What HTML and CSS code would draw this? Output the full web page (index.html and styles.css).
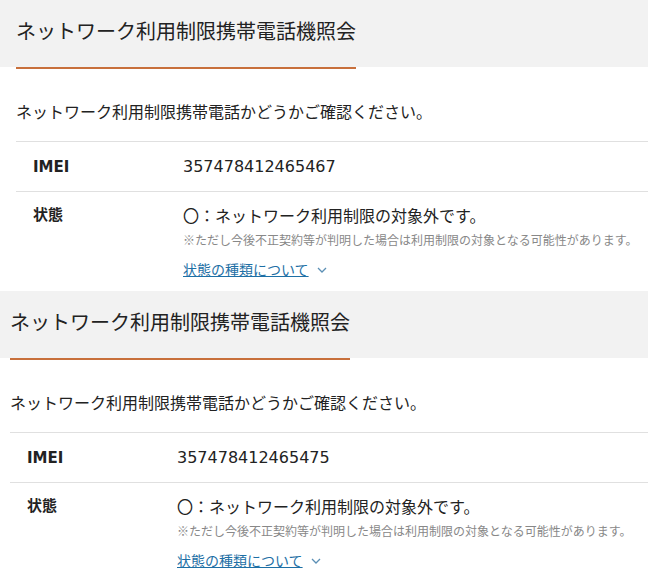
FILE: index.html
```html
<!DOCTYPE html>
<html lang="ja">
<head>
<meta charset="utf-8">
<link rel="stylesheet" href="styles.css">
</head>
<body>
<section class="block block-a">
  <div class="head"><h1 class="title">ネットワーク利用制限携帯電話機照会</h1></div>
  <div class="body">
    <p class="desc">ネットワーク利用制限携帯電話かどうかご確認ください。</p>
    <div class="table">
      <div class="row">
        <div class="label">IMEI</div>
        <div class="value">357478412465467</div>
      </div>
      <div class="row">
        <div class="label">状態</div>
        <div class="value">
          <div class="status">〇：ネットワーク利用制限の対象外です。</div>
          <div class="note">※ただし今後不正契約等が判明した場合は利用制限の対象となる可能性があります。</div>
          <div class="more"><a class="link" href="#">状態の種類について</a><svg class="chev" width="10" height="6" viewBox="0 0 10 6"><polyline points="1,1 5,5 9,1" fill="none" stroke="#5b8fb5" stroke-width="1.3"/></svg></div>
        </div>
      </div>
    </div>
  </div>
</section>
<section class="block block-b">
  <div class="head"><h1 class="title">ネットワーク利用制限携帯電話機照会</h1></div>
  <div class="body">
    <p class="desc">ネットワーク利用制限携帯電話かどうかご確認ください。</p>
    <div class="table">
      <div class="row">
        <div class="label">IMEI</div>
        <div class="value">357478412465475</div>
      </div>
      <div class="row">
        <div class="label">状態</div>
        <div class="value">
          <div class="status">〇：ネットワーク利用制限の対象外です。</div>
          <div class="note">※ただし今後不正契約等が判明した場合は利用制限の対象となる可能性があります。</div>
          <div class="more"><a class="link" href="#">状態の種類について</a><svg class="chev" width="10" height="6" viewBox="0 0 10 6"><polyline points="1,1 5,5 9,1" fill="none" stroke="#5b8fb5" stroke-width="1.3"/></svg></div>
        </div>
      </div>
    </div>
  </div>
</section>
</body>
</html>
```
FILE: styles.css
```css
html, body {
  margin: 0;
  padding: 0;
  background: #fff;
}
body {
  font-family: "DejaVu Sans", "Noto Sans CJK JP", sans-serif;
  color: #222;
  width: 648px;
  overflow: hidden;
}
.block {
  height: 291px;
  overflow: hidden;
}
.head {
  background: #f2f2f2;
  height: 67px;
}
.title {
  display: inline-block;
  margin: 0;
  font-family: "Noto Sans CJK JP", sans-serif;
  font-weight: 400;
  font-size: 20px;
  line-height: 30px;
  padding: 16px 0 21px;
  border-bottom: 2px solid #c8703c;
  color: #222;
}
.block-a .head, .block-a .body { padding-left: 16px; }
.block-b .head, .block-b .body { padding-left: 10px; }
.desc {
  margin: 32px 0 0;
  font-family: "Noto Sans CJK JP", sans-serif;
  font-size: 16px;
  line-height: 24px;
}
.table {
  margin-top: 18px;
  border-top: 1px solid #e0e0e0;
}
.row {
  display: flex;
  padding: 13px 0 12px;
}
.row + .row {
  border-top: 1px solid #e0e0e0;
  padding-top: 11px;
  padding-bottom: 13px;
}
.label {
  width: 167px;
  padding-left: 17px;
  box-sizing: border-box;
  flex: none;
  font-weight: 700;
  font-size: 15px;
  line-height: 24px;
}
.value {
  font-size: 16px;
  line-height: 24px;
}
.status {
  font-family: "Noto Sans CJK JP", sans-serif;
}
.note {
  font-family: "Noto Sans CJK JP", sans-serif;
  font-size: 12px;
  line-height: 20px;
  color: #888;
  margin-top: 3px;
}
.more {
  margin-top: 8px;
  display: flex;
  align-items: center;
  gap: 8px;
  line-height: 22px;
}
.link {
  font-family: "Noto Sans CJK JP", sans-serif;
  font-size: 14px;
  color: #1d6fa5;
  text-decoration: underline;
}
.chev {
  margin-top: 2px;
}
```
